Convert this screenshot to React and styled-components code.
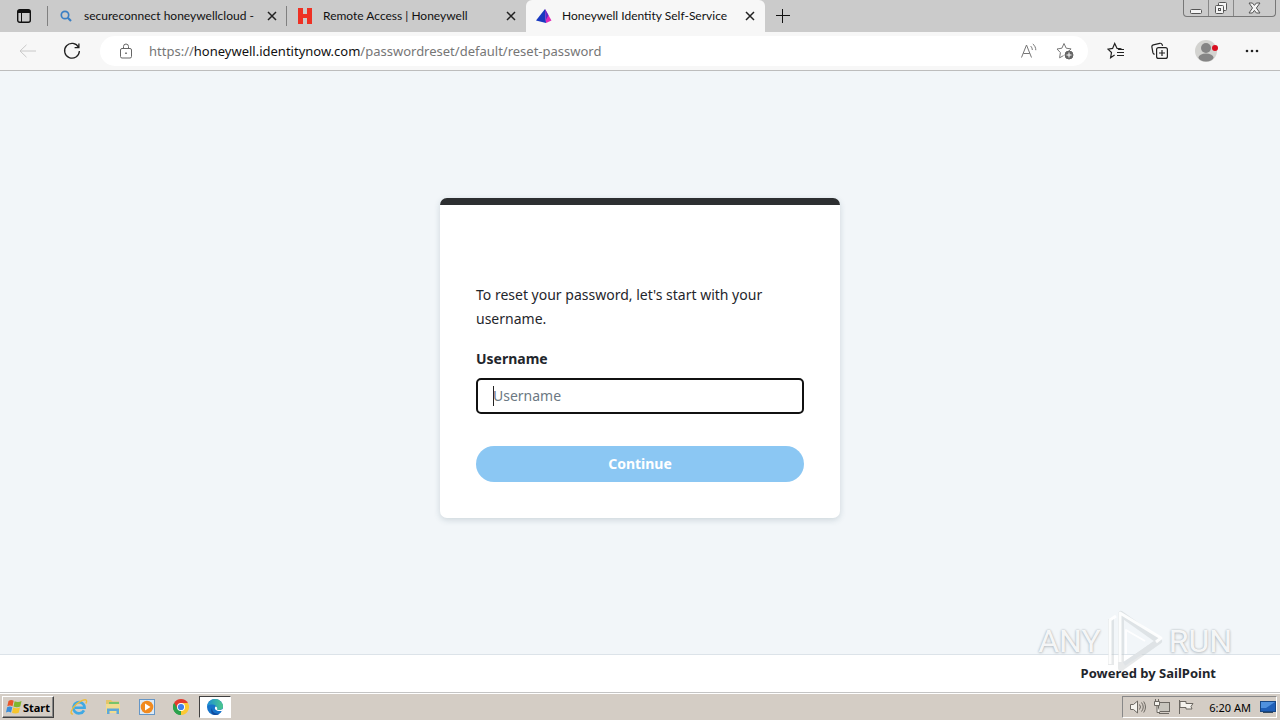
import React, { useState } from "react";
import styled, { createGlobalStyle, css } from "styled-components";

export default function App() {
  const [username, setUsername] = useState("");

  const usernameHandler = (e) => {
    setUsername(e.target.value);
  };

  return (
    <Screen>
      <GlobalStyle />
      <TabStrip>
        <TabActions aria-label="Tab actions">
          <TabActionsIcon />
        </TabActions>
        <Tab>
          <SearchIcon />
          <TabTitle>secureconnect honeywellcloud -</TabTitle>
          <CloseTab />
        </Tab>
        <Tab>
          <HoneywellIcon />
          <TabTitle>Remote Access | Honeywell</TabTitle>
          <CloseTab />
        </Tab>
        <Tab $active>
          <SailPointIcon />
          <TabTitle>Honeywell Identity Self-Service</TabTitle>
          <CloseTab />
        </Tab>
        <NewTab aria-label="New tab">
          <svg width="14" height="14" viewBox="0 0 14 14" stroke="#111" fill="none">
            <path d="M6.5 0v14M0 6.5h14" />
          </svg>
        </NewTab>
        <WindowControls>
          <WindowButton aria-label="Minimize">
            <svg width="13" height="12" viewBox="0 0 13 12" fill="#f4f4f4" stroke="#555">
              <rect x="0.5" y="7.5" width="11" height="4" rx="1" />
            </svg>
          </WindowButton>
          <WindowButton aria-label="Restore">
            <svg width="14" height="14" viewBox="0 0 14 14" fill="#f4f4f4" stroke="#555">
              <rect x="4.5" y="1.5" width="8" height="8" rx="1" />
              <rect x="1.5" y="4.5" width="8" height="8" rx="1" />
              <rect x="4.5" y="7.5" width="2" height="2" />
            </svg>
          </WindowButton>
          <WindowButton $wide aria-label="Close">
            <svg width="13" height="12" viewBox="0 0 13 12" fill="#f4f4f4" stroke="#555">
              <path d="M1 1h3.4l2 2.4 2-2.4H12L8.4 6 12 11H8.4l-2-2.6-2 2.6H1l3.5-5z" />
            </svg>
          </WindowButton>
        </WindowControls>
      </TabStrip>

      <Toolbar>
        <ToolButton aria-label="Back">
          <svg width="18" height="14" viewBox="0 0 18 14" stroke="#c8c8c8" fill="none">
            <path d="M7.5 0.8L1 7l6.5 6.2M1.2 7H17" />
          </svg>
        </ToolButton>
        <ToolButton aria-label="Refresh">
          <svg width="18" height="18" viewBox="0 0 18 18" stroke="#222" strokeWidth="1.3" fill="none">
            <path d="M15.6 5.4A7.4 7.4 0 1 0 16.4 9M15.9 1.4v4.3h-4.3" />
          </svg>
        </ToolButton>
        <AddressBar>
          <LockIcon />
          <Url href="#">
            https://<b>honeywell.identitynow.com</b>/passwordreset/default/reset-password
          </Url>
          <BarButton aria-label="Read aloud">
            <svg width="18" height="16" viewBox="0 0 18 16" stroke="#777" fill="none">
              <path d="M1.5 14.5L6.5 2l5 12.5M3.3 10.5h6.5M10.5 3c1.2 1 1.8 2.5 1.8 4M12.8 1c2 1.5 3 3.8 3 6.2" />
            </svg>
          </BarButton>
          <BarButton aria-label="Add to favorites">
            <svg width="18" height="18" viewBox="0 0 18 18" stroke="#777" fill="none">
              <path d="M7.5 13.6L3.6 15.8l.8-5.2L1 7l4.9-.8L8 1.5l2.2 4.7 4.9.7-2.3 2.1" />
              <circle cx="13" cy="13" r="4" fill="#666" stroke="#666" />
              <path d="M13 10.5v5M10.5 13h5" stroke="#fff" />
            </svg>
          </BarButton>
        </AddressBar>
        <ToolButton aria-label="Favorites">
          <svg width="18" height="18" viewBox="0 0 18 18" stroke="#222" strokeWidth="1.2" fill="none">
            <path d="M7.6 13L3.6 15.7l.9-5.2L1 7.2l4.6-.8L7.7 1.5l2.4 4.9 4.4.5M11 7.5h6M10 10.5h7M10 13.5h7" />
          </svg>
        </ToolButton>
        <ToolButton aria-label="Collections">
          <svg width="18" height="18" viewBox="0 0 18 18" stroke="#222" strokeWidth="1.2" fill="none">
            <path d="M3.6 12.4c-1.2-.3-1.5-.9-1.7-1.7L.9 5.1c-.2-1 .4-1.9 1.400-2.200l6.500-1.600c1.100-.2 2 .3 2.400 1.400l.4 1.200" />
            <rect x="5.6" y="5.6" width="10.8" height="10.8" rx="2" />
            <path d="M11 8v6M8 11h6" />
          </svg>
        </ToolButton>
        <ToolButton $wide aria-label="Profile">
          <svg width="24" height="24" viewBox="0 0 24 24">
            <circle cx="12" cy="12" r="11" fill="#d3d3d0" />
            <circle cx="12" cy="9" r="5" fill="#858585" />
            <ellipse cx="12" cy="18.5" rx="7.5" ry="4" fill="#858585" />
            <circle cx="21" cy="9" r="3" fill="#d90f20" />
          </svg>
        </ToolButton>
        <ToolButton aria-label="Settings and more">
          <svg width="14" height="4" viewBox="0 0 14 4" fill="#222">
            <circle cx="2" cy="2" r="1.3" />
            <circle cx="7" cy="2" r="1.3" />
            <circle cx="12" cy="2" r="1.3" />
          </svg>
        </ToolButton>
      </Toolbar>

      <Page>
        <Card>
          <Intro>To reset your password, let's start with your username.</Intro>
          <Label htmlFor="username">Username</Label>
          <UsernameInput
            id="username"
            type="text"
            placeholder="Username"
            value={username}
            onChange={usernameHandler}
          />
          <ContinueButton>Continue</ContinueButton>
        </Card>
      </Page>
      <Footer>Powered by SailPoint</Footer>

      <Taskbar>
        <StartButton>
          <WindowsIcon />
          Start
        </StartButton>
        <Launchers>
          <Launcher aria-label="Internet Explorer">
            <ExplorerIcon />
          </Launcher>
          <Launcher aria-label="Files">
            <FolderIcon />
          </Launcher>
          <Launcher aria-label="Media Player">
            <PlayerIcon />
          </Launcher>
          <Launcher aria-label="Chrome">
            <ChromeIcon />
          </Launcher>
          <Launcher $active aria-label="Edge">
            <EdgeIcon />
          </Launcher>
        </Launchers>
        <Tray>
          <TrayIcons />
          <Clock>6:20 AM</Clock>
          <DesktopIcon />
        </Tray>
      </Taskbar>

      <Watermark>
        <span>ANY</span>
        <svg width="58" height="62" viewBox="0 0 58 62" fill="none" strokeLinejoin="round">
          <g stroke="#b9bfc4" strokeOpacity="0.35" strokeWidth="6">
            <path d="M15 4v54l38-27zM5 9v46" />
          </g>
          <path d="M18 54l36-24" stroke="#dfe3e6" strokeWidth="4" />
          <g stroke="#fff" strokeOpacity="0.9" strokeWidth="3">
            <path d="M20 44V20l19 11" strokeWidth="2" />
            <path d="M14 52V3l41 25-5 4M4 54V10l6-4" />
          </g>
        </svg>
        <span>RUN</span>
      </Watermark>
    </Screen>
  );
}

function CloseTab() {
  return (
    <CloseButton aria-label="Close tab">
      <svg width="10" height="10" viewBox="0 0 10 10" stroke="#222" strokeWidth="1.5">
        <path d="M1 1l8 8M9 1L1 9" />
      </svg>
    </CloseButton>
  );
}

function TabActionsIcon() {
  return (
    <svg width="14" height="14" viewBox="0 0 14 14">
      <rect x="0.7" y="0.7" width="12.6" height="12.6" rx="2" fill="none" stroke="#111" strokeWidth="1.4" />
      <path d="M1 1h12v3H1z" fill="#111" />
      <path d="M4.5 4v9" stroke="#111" />
    </svg>
  );
}

function SearchIcon() {
  return (
    <svg width="16" height="16" viewBox="0 0 16 16" stroke="#3b7fc4" fill="none">
      <circle cx="7" cy="7" r="3.7" strokeWidth="1.7" />
      <path d="M9.8 9.8l3.2 3.2" strokeWidth="2.2" />
    </svg>
  );
}

function HoneywellIcon() {
  return (
    <svg width="16" height="16" viewBox="0 0 16 16" fill="#ee3124">
      <path d="M1 0h5v6h4V0h5v16h-5v-6H6v6H1z" />
    </svg>
  );
}

function SailPointIcon() {
  return (
    <svg width="16" height="16" viewBox="0 0 16 16">
      <path d="M9 1L0 12.5l10 2.500z" fill="#1838c0" />
      <path d="M9 1l6.5 11.5L10 15z" fill="#e02cb8" />
      <path d="M9 1l3.5 6.2L9.8 12z" fill="#5a2cc8" />
    </svg>
  );
}

function LockIcon() {
  return (
    <svg width="14" height="16" viewBox="0 0 14 16" fill="none" stroke="#666">
      <rect x="1.5" y="5.5" width="11" height="9.5" rx="1.5" />
      <path d="M4.500 5.500V3.500a2.500 2.500 0 0 1 5 0v2" />
      <circle cx="7" cy="10.2" r="0.5" fill="#666" />
    </svg>
  );
}

function WindowsIcon() {
  return (
    <svg width="16" height="16" viewBox="0 0 16 16">
      <path d="M2.5 2c2-1.3 3.6-1 5.2-.2L6.5 7.2C5 6.4 3.3 6.2 1.3 7.3z" fill="#e8562a" />
      <path d="M8.6 2.2c2 1 4.8 1 6.9-.2L14.3 7.4c-2 1.1-4.9 1-6.800.1z" fill="#7fb62f" />
      <path d="M1.1 8.3c2-1.1 3.7-.9 5.2-.1L5 13.5C3.5 12.7 1.8 12.5 0 13.500z" fill="#3a8edb" />
      <path d="M7.2 8.5c1.9.9 4.8 1 6.8-.1L12.7 13.8c-2 1.1-4.9 1-6.700 0z" fill="#f6c52c" />
    </svg>
  );
}

function ExplorerIcon() {
  return (
    <svg width="18" height="18" viewBox="0 0 18 18" fill="none">
      <path d="M14 12.3A5.6 5.6 0 1 1 14.6 9.8H5" stroke="#3fa9e4" strokeWidth="2.6" />
      <path d="M3 16C-.5 16.5 1 11 6 6.5 10 2.8 15.5.5 16.5 2.5c.4.9 0 2-.7 3" stroke="#edbd3c" strokeWidth="1.4" />
    </svg>
  );
}

function FolderIcon() {
  return (
    <svg width="18" height="18" viewBox="0 0 18 18">
      <path d="M2 2h5l1.5 1.500H15V15H2z" fill="#e4c569" />
      <path d="M5 4h10v3H5z" fill="#77c46a" />
      <path d="M2 6h14v9H2z" fill="#f1dc8f" />
      <path d="M3 16v-5.500h12V16h-2.500v-3h-7v3z" fill="#5fa8d8" />
    </svg>
  );
}

function PlayerIcon() {
  return (
    <svg width="18" height="18" viewBox="0 0 18 18">
      <rect x="1.5" y="1.5" width="15" height="15" fill="#dceaf7" stroke="#6596c6" />
      <circle cx="9" cy="9" r="6.3" fill="#f18a1f" />
      <path d="M7 5.5v7l5.500-3.500z" fill="#fff" />
    </svg>
  );
}

function ChromeIcon() {
  return (
    <svg width="18" height="18" viewBox="0 0 18 18">
      <path d="M9 9L2.07 5A8 8 0 0 1 15.93 5z" fill="#e33b2e" />
      <path d="M9 9L15.93 5A8 8 0 0 1 9 17z" fill="#fcc934" />
      <path d="M9 9L9 17A8 8 0 0 1 2.07 5z" fill="#2ba24c" />
      <path d="M9 5h6.93L12.5 11z" fill="#fcc934" />
      <path d="M2.07 5l3.5 6L9 9V5z" fill="#e33b2e" />
      <path d="M2.07 5l3.47 6L9 13l-1 4C2 16-.5 10 2.07 5z" fill="#2ba24c" />
      <circle cx="9" cy="9" r="4" fill="#fff" />
      <circle cx="9" cy="9" r="3.1" fill="#3f80ed" />
    </svg>
  );
}

function EdgeIcon() {
  return (
    <svg width="18" height="18" viewBox="0 0 18 18">
      <defs>
        <linearGradient id="edge-top" x1="0" x2="1">
          <stop offset="0" stopColor="#1b8fd6" />
          <stop offset="1" stopColor="#4cc98a" />
        </linearGradient>
      </defs>
      <circle cx="9" cy="9" r="8" fill="#1673ca" />
      <path d="M6 10c0 4 3 6.500 8 5.500A8 8 0 0 1 9 17C5 17 4.500 12 6 10z" fill="#114a9c" />
      <path d="M1.100 8A8 8 0 0 1 17 8.500c0 2.500-2 3.500-4 3.500H9.500C11 9.500 10 6.500 7 6.500S2 7 1.100 8z" fill="url(#edge-top)" />
      <path d="M9.600 8.500c-2 2 0 5.200 6.600 4.500l1.800-3c-2 2.200-5.500 2.500-7 1.500.500-1 .2-2.500-1.400-3z" fill="#fff" />
    </svg>
  );
}

function TrayIcons() {
  return (
    <svg width="66" height="16" viewBox="0 0 66 16" fill="#f5f3ee" stroke="#6c6862">
      <path d="M1.5 5.5h3l4-3.500v12l-4-3.500h-3z" />
      <path d="M10.5 5.500q2 2.500 0 5M12.500 3.500q3.500 4.500 0 9M14.700 2.500q3.600 5.500 0 11" fill="none" />
      <rect x="29.5" y="3.5" width="11" height="9" fill="#c8c5bd" />
      <path d="M30 14.500h10M25.500 2.500h5v4h-5zM28 6.500v7h3M26.500 0v2M29.500 0v2" />
      <path d="M50.500 1v14" />
      <path d="M51 2.500h6v2h7l-2 3 1 2.500h-6v-1.500h-6z" />
    </svg>
  );
}

function DesktopIcon() {
  return (
    <svg width="16" height="14" viewBox="0 0 16 14">
      <rect x="0.5" y="1.5" width="15" height="10" fill="#1f5fb8" stroke="#174785" />
      <path d="M1 2h14L6 8H1z" fill="#4f91df" />
      <path d="M3 12.500h10" stroke="#34495e" />
    </svg>
  );
}

const GlobalStyle = createGlobalStyle`
  * {
    box-sizing: border-box;
  }

  body {
    margin: 0;
    font-family: "Noto Sans", "Open Sans", sans-serif;
  }

  button,
  input {
    font-family: inherit;
  }

  svg {
    display: block;
    flex-shrink: 0;
  }
`;

const Screen = styled.div`
  min-height: 100vh;
  display: flex;
  flex-direction: column;
  position: relative;
  background-color: #f2f6f9;
`;

const plainButton = css`
  display: flex;
  align-items: center;
  justify-content: center;
  padding: 0;
  border: none;
  background: none;
`;

const TabStrip = styled.div`
  height: 32px;
  display: flex;
  background-color: #cbcbcb;
`;

const TabActions = styled.button`
  ${plainButton}
  width: 48px;
  position: relative;

  &::after {
    content: "";
    position: absolute;
    top: 6px;
    right: 0;
    height: 20px;
    border-right: 1px solid #808080;
  }
`;

const Tab = styled.div`
  width: 239px;
  display: flex;
  align-items: center;
  gap: 10px;
  padding: 0 10px;
  border-radius: 6px 6px 0 0;
  background-color: ${({ $active }) => ($active ? "#f7f7f7" : "transparent")};
  position: relative;

  & + &::before {
    content: "";
    position: absolute;
    top: 6px;
    left: -1px;
    height: 20px;
    border-left: ${({ $active }) => ($active ? "none" : "1px solid #808080")};
  }
`;

const TabTitle = styled.span`
  flex: 1;
  font-family: Lato, "Noto Sans", sans-serif;
  font-size: 12px;
  line-height: 16px;
  white-space: nowrap;
  color: #111;
`;

const CloseButton = styled.button`
  ${plainButton}
  width: 10px;
  height: 16px;
`;

const NewTab = styled.button`
  ${plainButton}
  width: 36px;
`;

const WindowControls = styled.div`
  height: 17px;
  display: flex;
  margin-left: auto;
  margin-right: 4px;
  border: 1px solid #777;
  border-top: none;
  border-radius: 0 0 4px 4px;
`;

const WindowButton = styled.button`
  ${plainButton}
  width: ${({ $wide }) => ($wide ? "41px" : "25px")};
  border-right: ${({ $wide }) => ($wide ? "none" : "1px solid #888")};
`;

const Toolbar = styled.div`
  height: 39px;
  display: flex;
  align-items: center;
  padding: 0 6px;
  background-color: #f7f7f7;
  border-bottom: 1px solid #bdbdbd;
`;

const ToolButton = styled.button`
  ${plainButton}
  width: ${({ $wide }) => ($wide ? "48px" : "44px")};
  height: 30px;
`;

const AddressBar = styled.div`
  flex: 1;
  height: 30px;
  display: flex;
  align-items: center;
  margin: 0 6px;
  padding: 0 5px 0 19px;
  border-radius: 15px;
  background-color: #fff;
`;

const Url = styled.a`
  flex: 1;
  margin-left: 16px;
  font-size: 13px;
  line-height: 20px;
  white-space: nowrap;
  text-decoration: none;
  color: #767676;

  b {
    font-weight: 400;
    color: #111;
  }
`;

const BarButton = styled.button`
  ${plainButton}
  width: 36px;
  height: 30px;
`;

const Page = styled.main`
  flex: 1;
  display: flex;
  align-items: center;
  justify-content: center;
  padding-bottom: 10px;
`;

const Card = styled.form`
  width: 400px;
  display: flex;
  flex-direction: column;
  padding: 78px 36px 36px;
  border-top: 7px solid #2d2f31;
  border-radius: 7px;
  background-color: #fff;
  box-shadow: 0 2px 6px rgba(40, 70, 90, 0.18);
`;

const Intro = styled.p`
  margin: 0 0 16px;
  font-size: 14px;
  line-height: 24px;
  color: #1f262c;
`;

const Label = styled.label`
  margin-bottom: 7px;
  font-size: 14px;
  font-weight: 700;
  line-height: 24px;
  color: #1f262c;
`;

const UsernameInput = styled.input`
  height: 36px;
  padding: 0 15px;
  border: 2px solid #111;
  border-radius: 5px;
  outline: none;
  font-size: 14px;
  background-color: #fff;

  &::placeholder {
    color: #6c7883;
    opacity: 1;
  }

  /* caret while the box is empty */
  &:placeholder-shown {
    background-image: linear-gradient(#222, #222);
    background-repeat: no-repeat;
    background-size: 1px 20px;
    background-position: 15px center;
  }
`;

const ContinueButton = styled.button`
  height: 36px;
  margin-top: 32px;
  border: none;
  border-radius: 18px;
  font-size: 14px;
  font-weight: 700;
  color: #fff;
  background-color: #8bc7f3;
`;

const Footer = styled.footer`
  height: 38px;
  padding-right: 64px;
  border-top: 1px solid #dce3e9;
  font-size: 13px;
  font-weight: 700;
  line-height: 37px;
  text-align: right;
  color: #1f262c;
  background-color: #fff;
`;

const Taskbar = styled.div`
  height: 28px;
  display: flex;
  align-items: center;
  padding: 3px 3px 2px 2px;
  border-top: 1px solid #c4c4c4;
  box-shadow: inset 0 1px #fff;
  background-color: #d4cdc5;
`;

const StartButton = styled.button`
  ${plainButton}
  width: 52px;
  height: 22px;
  gap: 1px;
  border: 1px solid;
  border-color: #fff #404040 #404040 #fff;
  box-shadow: inset -1px -1px #888;
  font-size: 11px;
  font-weight: 700;
  color: #000;
`;

const Launchers = styled.div`
  display: flex;
  gap: 2px;
  margin-left: 9px;
`;

const Launcher = styled.button`
  ${plainButton}
  width: 32px;
  height: 22px;
  ${({ $active }) =>
    $active &&
    css`
      border: 1px solid;
      border-color: #404040 #fff #fff #404040;
      background-color: #fff;
    `}
`;

const Tray = styled.div`
  height: 22px;
  display: flex;
  align-items: center;
  margin-left: auto;
  padding: 0 0 0 6px;
  border: 1px solid;
  border-color: #888 #fff #fff #888;
`;

const Clock = styled.time`
  margin: 0 9px 0 14px;
  font-size: 11px;
  color: #000;
`;

const Watermark = styled.div`
  position: absolute;
  right: 48px;
  bottom: 48px;
  display: flex;
  align-items: center;
  gap: 5px;
  font-family: Roboto, "Liberation Sans", sans-serif;
  font-size: 32px;
  line-height: 60px;
  color: rgba(255, 255, 255, 0.9);
  text-shadow: 0 0 2px #a9b0b6, 0 1px 3px #c5cace;
  pointer-events: none;
`;
